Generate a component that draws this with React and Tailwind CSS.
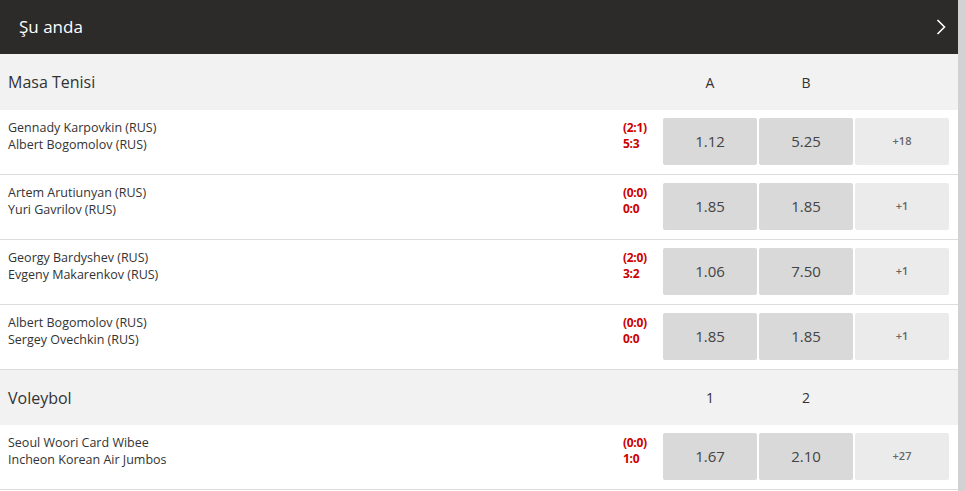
import { useState } from "react";

const sections = [
  {
    name: "Masa Tenisi",
    cols: ["A", "B"],
    h: "h-[56px]",
    matches: [
      { home: "Gennady Karpovkin (RUS)", away: "Albert Bogomolov (RUS)", set: "(2:1)", score: "5:3", odds: ["1.12", "5.25"], more: "+18" },
      { home: "Artem Arutiunyan (RUS)", away: "Yuri Gavrilov (RUS)", set: "(0:0)", score: "0:0", odds: ["1.85", "1.85"], more: "+1" },
      { home: "Georgy Bardyshev (RUS)", away: "Evgeny Makarenkov (RUS)", set: "(2:0)", score: "3:2", odds: ["1.06", "7.50"], more: "+1" },
      { home: "Albert Bogomolov (RUS)", away: "Sergey Ovechkin (RUS)", set: "(0:0)", score: "0:0", odds: ["1.85", "1.85"], more: "+1" },
    ],
  },
  {
    name: "Voleybol",
    cols: ["1", "2"],
    h: "h-[55px]",
    matches: [
      { home: "Seoul Woori Card Wibee", away: "Incheon Korean Air Jumbos", set: "(0:0)", score: "1:0", odds: ["1.67", "2.10"], more: "+27" },
    ],
  },
];

function MatchRow({ match }) {
  return (
    <div className="flex h-[65px] border-b border-[#dcdcdc] bg-white pr-[9px]">
      <div className="flex-1 pl-2 pt-[9px] text-[12.5px] leading-[17px] text-[#333]">
        <div>{match.home}</div>
        <div>{match.away}</div>
      </div>
      <div className="w-[40px] pt-[10px] text-[12px] font-bold leading-[16px] tracking-[-0.3px] text-[#cc0000]">
        <div className="h-[16px]">{match.set}</div>
        <div className="h-[16px]">{match.score}</div>
      </div>
      <div className="flex gap-[2px] pt-[8px]">
        {match.odds.map((o, i) => (
          <button
            key={i}
            className="flex h-[47px] w-[94px] items-center justify-center rounded-[2px] bg-[#d9d9d9] text-[15px] text-[#444] hover:bg-[#cfcfcf]"
          >
            {o}
          </button>
        ))}
        <button className="flex h-[47px] w-[94px] items-center justify-center rounded-[2px] bg-[#ebebeb] text-[11px] font-semibold text-[#666]">
          {match.more}
        </button>
      </div>
    </div>
  );
}

function Section({ section }) {
  return (
    <div>
      <div className={`flex ${section.h} items-center bg-[#f2f2f2] pr-[9px]`}>
        <div className="flex-1 pl-2 text-[16px] text-[#333]">{section.name}</div>
        <div className="flex gap-[2px]">
          {section.cols.map((c) => (
            <div key={c} className="w-[94px] text-center text-[14px] text-[#333]">
              {c}
            </div>
          ))}
          <div className="w-[94px]" />
        </div>
      </div>
      {section.matches.map((m, i) => (
        <MatchRow key={i} match={m} />
      ))}
    </div>
  );
}

export default function App() {
  const [open] = useState(true);

  return (
    <div className="flex h-[491px] w-[966px] bg-[#d2d2d2] font-['Open_Sans',sans-serif]">
      <div className="h-full w-[958px] overflow-hidden bg-white">
        <div className="flex h-[54px] items-center justify-between bg-[#2d2a2a] pl-[19px] pr-[12px]">
          <span className="text-[17px] text-white">Şu anda</span>
          <svg width="10" height="16" viewBox="0 0 10 16" fill="none" stroke="white" strokeWidth="1.6">
            <path d="M1.5 1 L8.5 8 L1.5 15" />
          </svg>
        </div>
        {open && sections.map((s) => <Section key={s.name} section={s} />)}
      </div>
    </div>
  );
}
